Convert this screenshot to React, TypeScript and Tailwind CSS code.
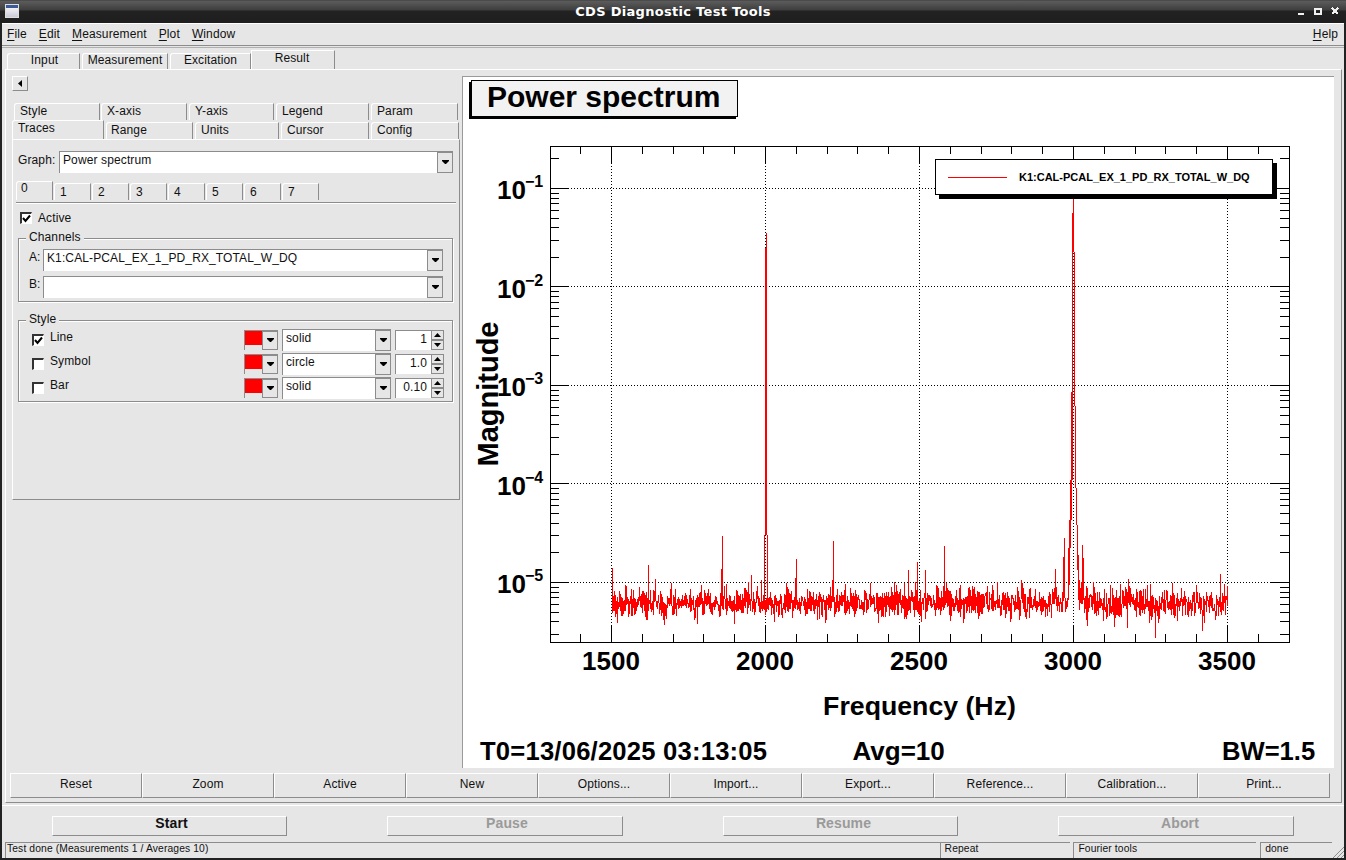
import React from "react";

const FONT = "font-['Liberation_Sans',Arial,sans-serif]";
const RAISED = "border-t border-l border-t-white border-l-white border-r border-b border-r-[#8c8c8c] border-b-[#8c8c8c]";

function DownArrow() {
  return (
    <svg width="7" height="5" viewBox="0 0 7 5" className="block">
      <path d="M0 0H7V1L4 4H3L0 1Z" fill="#000" />
    </svg>
  );
}

function ArrowBtn({ w = 16 }: { w?: number }) {
  return (
    <div className="flex h-full shrink-0 items-center justify-center border border-[#8c8c8c] bg-[#e6e6e6]" style={{ width: w }}>
      <DownArrow />
    </div>
  );
}

function Combo({ text, w, h = 22, btn = 16 }: { text: string; w: number; h?: number; btn?: number }) {
  return (
    <div className="flex shrink-0 border-t border-l border-t-[#8c8c8c] border-l-[#8c8c8c] bg-white" style={{ width: w, height: h }}>
      <div className="flex-1 truncate pl-[3px] pt-[1px] text-[12px] leading-[14px] text-[#111]">{text}</div>
      <ArrowBtn w={btn} />
    </div>
  );
}

function Check({ on }: { on?: boolean }) {
  return (
    <div className="h-[12px] w-[12px] shrink-0 border-t-2 border-l-2 border-b border-r border-t-[#333] border-l-[#333] border-b-white border-r-white bg-white">
      {on && (
        <svg width="10" height="10" viewBox="0 0 10 10" className="block">
          <path d="M1 4L3.5 7L8 1.5" fill="none" stroke="#000" strokeWidth="2" />
        </svg>
      )}
    </div>
  );
}

function Tab({ label, w, ml = 0, h, on, pl = 5, pt = 0, lh = 14 }: { label: string; w: number; ml?: number; h: number; on?: boolean; pl?: number; pt?: number; lh?: number }) {
  return (
    <div
      className={`shrink-0 rounded-tl-[3px] border-t border-l border-r border-t-white border-l-white border-r-[#8c8c8c] text-[12px] text-[#111] ${on ? "z-10" : ""}`}
      style={{ width: w, height: h, marginLeft: ml, paddingLeft: pl, paddingTop: pt, lineHeight: `${lh}px` }}
    >
      {label}
    </div>
  );
}

function Group({ title, h, children, pt }: { title: string; h: number; pt: number; children: React.ReactNode }) {
  return (
    <div className="relative ml-[5px] w-[435px] border border-[#8c8c8c] shadow-[inset_1px_1px_0_#fff,1px_1px_0_#fff]" style={{ height: h, paddingTop: pt }}>
      <div className="absolute top-[-8px] left-[7px] bg-[#e6e6e6] px-[3px] text-[12px] leading-[13px] text-[#111]">{title}</div>
      {children}
    </div>
  );
}

function StyleRow({ on, label, combo, num }: { on?: boolean; label: string; combo: string; num: string }) {
  return (
    <div className="flex h-[22px] items-start">
      <div className="ml-[13px] mt-[5px]"><Check on={on} /></div>
      <div className="ml-[6px] mt-[1px] w-[194px] text-[12px] leading-[14px] text-[#111]">{label}</div>
      <div className="mt-[1px] flex h-[20px] w-[34px] border-t border-l border-t-[#8c8c8c] border-l-[#8c8c8c]">
        <div className="h-[14px] w-[17px] bg-[#ff0000]" />
        <ArrowBtn w={16} />
      </div>
      <div className="ml-[4px]"><Combo text={combo} w={109} /></div>
      <div className="ml-[4px] mt-[1px] flex h-[20px] w-[49px]">
        <div className="w-[36px] border-t border-l border-t-[#8c8c8c] border-l-[#8c8c8c] bg-white pr-[4px] pt-[1px] text-right text-[12px] leading-[14px] text-[#111]">{num}</div>
        <div className="flex w-[13px] flex-col">
          <div className="flex h-[10px] items-center justify-center border border-[#8c8c8c]"><DownArrow2 up /></div>
          <div className="flex h-[10px] items-center justify-center border border-[#8c8c8c]"><DownArrow2 /></div>
        </div>
      </div>
    </div>
  );
}

function DownArrow2({ up }: { up?: boolean }) {
  return (
    <svg width="7" height="4" viewBox="0 0 7 4" className="block">
      <path d={up ? "M3.5 0L7 4H0Z" : "M0 0H7L3.5 4Z"} fill="#000" />
    </svg>
  );
}

function buildSpectrum() {
  let s = 20250613;
  const r = () => {
    s |= 0; s = (s + 0x6d2b79f5) | 0;
    let t = Math.imul(s ^ (s >>> 15), 1 | s);
    t = (t + Math.imul(t ^ (t >>> 7), 61 | t)) ^ t;
    return ((t ^ (t >>> 14)) >>> 0) / 4294967296;
  };
  const g = () => Math.sqrt(-2 * Math.log(r() + 1e-9)) * Math.cos(2 * Math.PI * r());
  const spikes: Record<number, number> = {
    612: 568, 626: 589, 648: 565, 655: 579, 671: 583, 722: 536, 721: 569, 751: 575, 761: 580, 796: 559, 795: 578, 833: 541, 832: 580, 870: 583, 908: 570, 917: 562, 925: 570, 944: 546, 936: 585, 1021: 580,
    1055: 569, 1063: 557, 1064: 538, 1082: 545, 1083: 558, 1128: 579, 1220: 574, 1224: 584, 1172: 583, 1150: 584,
  };
  const dips: Record<number, number> = { 664: 625, 697: 624, 734: 624, 1087: 626, 1114: 627, 1127: 628, 1155: 638, 1202: 631, 825: 623, 878: 623 };
  let d = "";
  let first = true;
  for (let x = 612; x <= 1227; x++) {
    if (x >= 1068 && x <= 1079) { first = true; continue; }
    const ys = [0, 1, 2].map(() => Math.max(582, Math.min(623, 603 + g() * 7.5)));
    if (spikes[x]) ys[0] = spikes[x];
    if (dips[x]) ys[1] = dips[x];
    ys.forEach((y, i) => {
      d += `${first ? "M" : "L"}${x + (i < 2 ? 0.5 : 0.9)} ${y.toFixed(0)}`;
      first = false;
    });
  }
  const vs: [number, number, number][] = [
    [1068, 548, 600], [1069, 520, 585], [1070, 480, 548], [1071, 392, 520], [1072, 213, 480], [1073, 198, 252],
    [1074, 252, 406], [1075, 406, 488], [1076, 488, 525], [1077, 525, 570], [1078, 555, 600], [1079, 580, 610],
    [765, 248, 535], [766, 233, 535], [767, 535, 605], [764, 535, 605],
  ];
  for (const [x, y1, y2] of vs) d += `M${x + 0.5} ${y1}V${y2}`;
  return d;
}

function Plot() {
  const X0 = 550, X1 = 1289, Y0 = 146, Y1 = 642;
  const majorX = [611.5, 765.5, 919.5, 1073.5, 1227.5];
  const minorX: number[] = [];
  for (let i = -2; i <= 22; i++) {
    const x = Math.round(611 + i * 30.8) + 0.5;
    if (x > X0 && x < X1 && i % 5 !== 0) minorX.push(x);
  }
  const majorY = [188.5, 286.5, 385.5, 483.5, 582.5];
  const minorY: number[] = [];
  for (let e = 0; e < 6; e++) {
    const base = 89.5 + e * 98.5;
    for (const m of [2, 3, 4, 5, 6, 7, 8, 9]) {
      const y = Math.round(base + 98.5 - 98.5 * Math.log10(m)) + 0.5;
      if (y > Y0 && y < Y1) minorY.push(y);
    }
  }
  const T = "font-bold";
  return (
    <svg viewBox="463 77 871 691" width="871" height="691" className={`block tracking-normal ${FONT}`} fill="#000">
      {majorY.map((y) => <path key={y} d={`M${X0 + 18} ${y}H${X1 - 18}`} stroke="#000" strokeDasharray="1 2" shapeRendering="crispEdges" />)}
      {majorX.map((x) => <path key={x} d={`M${x} ${Y0 + 17}V${Y1 - 17}`} stroke="#000" strokeDasharray="1 2" shapeRendering="crispEdges" />)}
      <path d={buildSpectrum()} fill="none" stroke="#ff0000" strokeWidth="1" shapeRendering="crispEdges" />
      <rect x={X0 + 0.5} y={Y0 + 0.5} width={X1 - X0} height={Y1 - Y0} fill="none" stroke="#000" shapeRendering="crispEdges" />
      {majorX.map((x) => <path key={x} d={`M${x} ${Y0}v17M${x} ${Y1}v-17`} stroke="#000" shapeRendering="crispEdges" />)}
      {minorX.map((x) => <path key={x} d={`M${x} ${Y0}v8M${x} ${Y1}v-8`} stroke="#000" shapeRendering="crispEdges" />)}
      {majorY.map((y) => <path key={y} d={`M${X0} ${y}h18M${X1} ${y}h-18`} stroke="#000" shapeRendering="crispEdges" />)}
      {minorY.map((y) => <path key={y} d={`M${X0} ${y}h9M${X1} ${y}h-9`} stroke="#000" shapeRendering="crispEdges" />)}

      <rect x="469" y="82" width="267" height="37" fill="#000" />
      <rect x="471" y="80.5" width="266" height="36" fill="#f2f2f2" stroke="#000" shapeRendering="crispEdges" />
      <text x="487" y="107" fontSize="30" className={T}>Power spectrum</text>

      <rect x="939" y="163" width="338" height="36" fill="#000" />
      <rect x="935.5" y="159.5" width="337" height="35" fill="#fff" stroke="#000" shapeRendering="crispEdges" />
      <path d="M948 177.5H1007" stroke="#ff0000" shapeRendering="crispEdges" />
      <text x="1019" y="181" fontSize="11" className={T}>K1:CAL-PCAL_EX_1_PD_RX_TOTAL_W_DQ</text>

      {["1", "2", "3", "4", "5"].map((e, i) => (
        <g key={e} className={T}>
          <text x="497" y={199 + i * 98.5} fontSize="26">10</text>
          <text x="525" y={187 + i * 98.5} fontSize="16">−{e}</text>
        </g>
      ))}
      {["1500", "2000", "2500", "3000", "3500"].map((t, i) => (
        <text key={t} x={611 + i * 154} y="670" fontSize="26" textAnchor="middle" className={T}>{t}</text>
      ))}
      <text x="919.5" y="715" fontSize="26.7" textAnchor="middle" className={T}>Frequency (Hz)</text>
      <text x="0" y="0" fontSize="29" textAnchor="middle" className={T} transform="translate(498 394) rotate(-90)">Magnitude</text>
      <text x="480" y="760" fontSize="25.6" className={T} textLength="287">T0=13/06/2025 03:13:05</text>
      <text x="852.5" y="760" fontSize="26" className={T}>Avg=10</text>
      <text x="1222" y="760" fontSize="25.6" className={T}>BW=1.5</text>
    </svg>
  );
}

const row1: [string, number, number][] = [["Style", 86, 2], ["X-axis", 86, 1], ["Y-axis", 85, 2], ["Legend", 93, 2], ["Param", 87, 2]];
const row2: [string, number, number, number][] = [["Range", 87, 2, 4], ["Units", 84, 2, 5], ["Cursor", 88, 2, 5], ["Config", 88, 2, 5]];
const actions = ["Reset", "Zoom", "Active", "New", "Options...", "Import...", "Export...", "Reference...", "Calibration...", "Print..."];

function Menu({ k, rest, ml }: { k: string; rest: string; ml: number }) {
  return <span style={{ marginLeft: ml }}><span className="underline underline-offset-2">{k}</span>{rest}</span>;
}

function RunBtn({ label, ml, on, w, pl }: { label: string; ml: number; on?: boolean; w: number; pl: number }) {
  return (
    <div className={`flex h-[20px] items-center justify-center pb-[5px] text-[14px] font-bold ${RAISED} ${on ? "text-[#111]" : "text-[#9a9a9a]"}`} style={{ marginLeft: ml, width: w, paddingLeft: pl }}>
      {label}
    </div>
  );
}

function Status({ text, w, ml = 0, pl = 4 }: { text: string; w: number; ml?: number; pl?: number }) {
  return (
    <div className="h-full truncate border-t border-l border-t-[#8c8c8c] border-l-[#8c8c8c] text-[10.3px] leading-[12px] text-[#111]" style={{ width: w, marginLeft: ml, paddingLeft: pl }}>
      {text}
    </div>
  );
}

const MAINTAB = "ml-[2px] h-[16px] shrink-0 rounded-tl-[3px] border-t border-l border-r border-t-white border-l-white border-r-[#8c8c8c] text-center text-[12px] leading-[13px] text-[#111]";

export default function App() {
  return (
    <div className={`flex h-[860px] w-[1346px] flex-col overflow-hidden bg-[#e6e6e6] tracking-[0.12px] ${FONT}`}>
      {/* title bar */}
      <div className="relative flex h-[23px] shrink-0 items-center justify-center bg-[linear-gradient(#3a3a3a_0,#5c5c5c_1px,#3e3e3e_10px,#222_11px,#1e1e1e_100%)]">
        <div className="absolute left-[5px] top-[4px] h-[14px] w-[14px] border border-[#ddd] bg-[linear-gradient(#3a5a9c_0,#3a5a9c_3px,#f2f2f2_3px,#c9c9d8_100%)]" />
        <span className="font-['DejaVu_Sans',sans-serif] text-[13px] font-bold tracking-[0.3px] text-white">CDS Diagnostic Test Tools</span>
        <svg width="44" height="12" viewBox="0 0 44 12" className="absolute right-[4px] top-[6px]" fill="none" stroke="#f0f0f0" strokeWidth="2" shapeRendering="crispEdges">
          <path d="M0 8H6" />
          <path d="M17 3H23V8H17Z" strokeWidth="1.4" />
          <path d="M34 2L40 8M40 2L34 8" />
        </svg>
      </div>

      <div className="flex min-h-0 flex-1 flex-col border-x-2 border-b-2 border-[#222]">
        {/* menu bar */}
        <div className="flex h-[23px] shrink-0 items-center border-t border-b border-t-white border-b-[#8c8c8c] pb-[1px] text-[12px] text-[#111]">
          <Menu k="F" rest="ile" ml={5} />
          <Menu k="E" rest="dit" ml={12} />
          <Menu k="M" rest="easurement" ml={12} />
          <Menu k="P" rest="lot" ml={12} />
          <Menu k="W" rest="indow" ml={12} />
          <span className="ml-auto mr-[6px]"><span className="underline underline-offset-2">H</span>elp</span>
        </div>
        <div className="mt-[1px] h-[3px] shrink-0 border-t border-t-[#b0b0b0]" />

        {/* main tabs */}
        <div className="flex h-[19px] shrink-0 items-end pl-[3px]">
          <div className={`${MAINTAB} w-[73px] pl-[2px]`}>Input</div>
          <div className={`${MAINTAB} w-[86px]`}>Measurement</div>
          <div className={`${MAINTAB} w-[81px]`}>Excitation</div>
          <div className="h-[19px] w-[84px] shrink-0 border-t border-l border-r border-t-white border-l-white border-r-[#8c8c8c] pr-[2px] text-center text-[12px] leading-[14px] text-[#111]">Result</div>
        </div>

        {/* tab frame */}
        <div className={`ml-[3px] flex h-[734px] w-[1337px] shrink-0 flex-col ${RAISED}`}>
          <div className="flex h-[698px] shrink-0">
            <div className="ml-[6px] w-[450px] shrink-0 pt-[6px]">
              <div className="flex h-[15px] w-[16px] items-center justify-center border-t border-l border-r border-b border-t-white border-l-white border-r-[#8c8c8c] border-b-[#8c8c8c]">
                <svg width="5" height="7" viewBox="0 0 5 7" className="block"><path d="M4 0V7L0 3.5Z" fill="#000" /></svg>
              </div>
              <div className="mt-[12px] flex h-[17px]">
                {row1.map(([l, w, ml]) => <Tab key={l} label={l} w={w} ml={ml} h={17} />)}
              </div>
              <div className="relative flex h-[19px] items-end">
                <Tab label="Traces" w={92} h={19} on pl={5} />
                {row2.map(([l, w, ml, pl]) => <Tab key={l} label={l} w={w} ml={ml} h={17} pt={0} pl={pl} />)}
              </div>
              <div className={`h-[361px] w-[448px] ${RAISED} pt-[11px]`}>
                <div className="flex h-[22px] items-start pl-[5px]">
                  <div className="w-[41px] pt-[2px] text-[12px] leading-[14px] text-[#111]">Graph:</div>
                  <Combo text="Power spectrum" w={394} />
                </div>
                <div className="ml-[3px] mt-[8px] flex h-[19px] items-end">
                  <Tab label="0" w={37} h={19} on pl={4} lh={12} />
                  {["1", "2", "3", "4", "5", "6", "7"].map((n) => <Tab key={n} label={n} w={37} ml={1} h={17} pl={5} pt={1} />)}
                </div>
                <div className="ml-[3px] mt-[2px] h-[2px] w-[440px] border-t border-b border-t-[#8c8c8c] border-b-white" />
                <div className="ml-[7px] mt-[8px] flex h-[13px] items-start">
                  <Check on />
                  <span className="ml-[6px] text-[12px] leading-[12px] text-[#111]">Active</span>
                </div>
                <div className="mt-[13px]">
                  <Group title="Channels" h={64} pt={10}>
                    <div className="flex h-[22px] items-start pl-[10px]">
                      <span className="w-[14px] pt-[1px] text-[12px] leading-[14px] text-[#111]">A:</span>
                      <Combo text="K1:CAL-PCAL_EX_1_PD_RX_TOTAL_W_DQ" w={400} />
                    </div>
                    <div className="mt-[5px] flex h-[22px] items-start pl-[10px]">
                      <span className="w-[14px] pt-[1px] text-[12px] leading-[14px] text-[#111]">B:</span>
                      <Combo text="" w={400} />
                    </div>
                  </Group>
                </div>
                <div className="mt-[18px]">
                  <Group title="Style" h={82} pt={8}>
                    <div className="flex flex-col gap-[2px]">
                      <StyleRow on label="Line" combo="solid" num="1" />
                      <StyleRow label="Symbol" combo="circle" num="1.0" />
                      <StyleRow label="Bar" combo="solid" num="0.10" />
                    </div>
                  </Group>
                </div>
              </div>
            </div>
            <div className="mt-[6px] h-[692px] w-[872px] shrink-0 border-t border-l border-[#9a9a9a] bg-white">
              <Plot />
            </div>
          </div>
          <div className="ml-[4px] mt-[5px] flex h-[25px] shrink-0">
            {actions.map((a) => (
              <div key={a} className={`flex h-[25px] w-[132px] shrink-0 items-center justify-center pb-[3px] text-[12px] text-[#111] ${RAISED}`}>{a}</div>
            ))}
          </div>
        </div>

        <div className="mt-[2px] h-[11px] shrink-0 border-t border-t-white" />
        <div className="flex h-[20px] shrink-0">
          <RunBtn label="Start" ml={50} w={235} pl={4} on />
          <RunBtn label="Pause" ml={100} w={236} pl={4} />
          <RunBtn label="Resume" ml={100} w={235} pl={6} />
          <RunBtn label="Abort" ml={100} w={236} pl={8} />
        </div>
        <div className="mt-[6px] flex h-[16px] shrink-0 pl-[3px]">
          <Status text="Test done (Measurements 1 / Averages 10)" w={936} pl={1} />
          <Status text="Repeat" w={131} />
          <Status text="Fourier tools" w={183} ml={3} />
          <Status text="done" w={72} ml={4} />
          <svg width="12" height="12" viewBox="0 0 12 12" className="ml-auto mt-[4px]" stroke="#8c8c8c"><path d="M12 1L1 12M12 5L5 12M12 9L9 12" /></svg>
        </div>
      </div>
    </div>
  );
}
